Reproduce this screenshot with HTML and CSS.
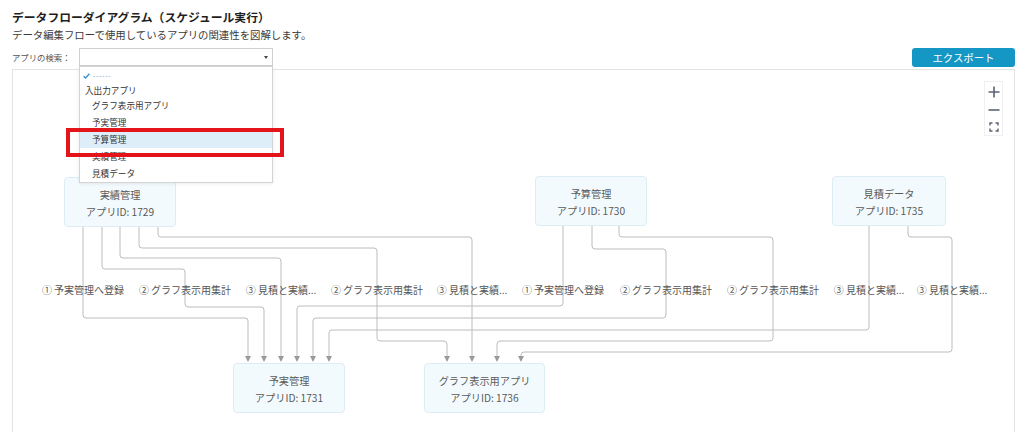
FILE: index.html
```html
<!DOCTYPE html>
<html lang="ja">
<head>
<meta charset="utf-8">
<title>データフローダイアグラム</title>
<link rel="stylesheet" href="styles.css">
</head>
<body>
<div class="page">
  <h1 class="title">データフローダイアグラム（スケジュール実行）</h1>
  <p class="subtitle">データ編集フローで使用しているアプリの関連性を図解します。</p>
  <div class="toolbar">
    <span class="search-label">アプリの検索：</span>
    <div class="select">
      <span class="select-arrow"></span>
      <ul class="dropdown">
        <li class="opt opt-none"><svg class="check" width="7" height="6" viewBox="0 0 7 6"><path d="M0.6 3.2 L2.6 5 L6.4 0.8" fill="none" stroke="#3d8fd6" stroke-width="1.4"/></svg><span class="dashes">------</span></li>
        <li class="opt opt-group">入出力アプリ</li>
        <li class="opt">グラフ表示用アプリ</li>
        <li class="opt">予実管理</li>
        <li class="opt opt-active">予算管理</li>
        <li class="opt">実績管理</li>
        <li class="opt">見積データ</li>
      </ul>
      <div class="highlight-box"></div>
    </div>
    <button class="export">エクスポート</button>
  </div>
  <div class="canvas">
    <svg class="edges" width="1001" height="380" viewBox="0 0 1001 380">
      <g transform="translate(-13,-71)" fill="none" stroke="#bcbcbc" stroke-width="1">
        <path d="M83 227 V316 Q83 319 86 319 H245 Q248 319 248 322 V357"/>
        <path d="M102 227 V267 Q102 270 105 270 H182 Q185 270 185 273 V305 Q185 308 188 308 H261 Q264 308 264 311 V357"/>
        <path d="M120 227 V256 Q120 259 123 259 H278 Q281 259 281 262 V357"/>
        <path d="M139 227 V246 Q139 249 142 249 H374 Q377 249 377 252 V339 Q377 342 380 342 H444 Q447 342 447 345 V357"/>
        <path d="M158 227 V235 Q158 238 161 238 H469 Q472 238 472 241 V357"/>
        <path d="M563 227 V304 Q563 307 560 307 H300 Q297 307 297 310 V357"/>
        <path d="M592 227 V247 Q592 250 595 250 H663 Q666 250 666 253 V316 Q666 319 663 319 H316 Q313 319 313 322 V357"/>
        <path d="M619 227 V235 Q619 238 622 238 H770 Q773 238 773 241 V339 Q773 342 770 342 H500 Q497 342 497 345 V357"/>
        <path d="M869 227 V328 Q869 331 866 331 H332 Q329 331 329 334 V357"/>
        <path d="M908 227 V235 Q908 238 911 238 H949 Q952 238 952 241 V350 Q952 353 949 353 H524 Q521 353 521 356 V357"/>
      </g>
      <g transform="translate(-13,-71)" fill="#9a9a9a">
        <polygon points="245,357 251,357 248,363"/>
        <polygon points="261,357 267,357 264,363"/>
        <polygon points="278,357 284,357 281,363"/>
        <polygon points="294,357 300,357 297,363"/>
        <polygon points="310,357 316,357 313,363"/>
        <polygon points="326,357 332,357 329,363"/>
        <polygon points="444,357 450,357 447,363"/>
        <polygon points="469,357 475,357 472,363"/>
        <polygon points="494,357 500,357 497,363"/>
        <polygon points="518,357 524,357 521,363"/>
      </g>
    </svg>

    <div class="node" style="left:51px;top:107px;width:112px;"><div>実績管理</div><div>アプリID: 1729</div></div>
    <div class="node" style="left:522px;top:106px;width:112px;"><div>予算管理</div><div>アプリID: 1730</div></div>
    <div class="node" style="left:819px;top:106px;width:114px;"><div>見積データ</div><div>アプリID: 1735</div></div>
    <div class="node" style="left:220px;top:293px;width:112px;"><div>予実管理</div><div>アプリID: 1731</div></div>
    <div class="node" style="left:411px;top:293px;width:121px;"><div>グラフ表示用アプリ</div><div>アプリID: 1736</div></div>

    <span class="edge-label" style="left:70px;">① 予実管理へ登録</span>
    <span class="edge-label" style="left:172px;">② グラフ表示用集計</span>
    <span class="edge-label" style="left:268px;">③ 見積と実績...</span>
    <span class="edge-label" style="left:364px;">② グラフ表示用集計</span>
    <span class="edge-label" style="left:459px;">③ 見積と実績...</span>
    <span class="edge-label" style="left:550px;">① 予実管理へ登録</span>
    <span class="edge-label" style="left:653px;">② グラフ表示用集計</span>
    <span class="edge-label" style="left:760px;">② グラフ表示用集計</span>
    <span class="edge-label" style="left:856px;">③ 見積と実績...</span>
    <span class="edge-label" style="left:939px;">③ 見積と実績...</span>

    <div class="zoom-controls">
      <svg width="12" height="12" viewBox="0 0 12 12"><path d="M0.5 6 H11.5 M6 0.5 V11.5" stroke="#5b6473" stroke-width="1.6" fill="none"/></svg>
      <svg width="12" height="12" viewBox="0 0 12 12"><path d="M0.5 6 H11.5" stroke="#5b6473" stroke-width="1.6" fill="none"/></svg>
      <svg width="10" height="10" viewBox="0 0 10 10"><path d="M1 3.5 V1 H3.5 M6.5 1 H9 V3.5 M9 6.5 V9 H6.5 M3.5 9 H1 V6.5" stroke="#5b6473" stroke-width="1.4" fill="none"/></svg>
    </div>
  </div>
</div>
</body>
</html>
```

FILE: styles.css
```css
* { box-sizing: border-box; }

html, body {
  margin: 0;
  padding: 0;
  background: #ffffff;
}

body {
  font-family: "Noto Sans CJK JP", "Noto Sans", sans-serif;
  color: #333333;
  overflow: hidden;
}

.page {
  padding: 9px 9px 0 12px;
}

.title {
  margin: 0;
  font-size: 11.8px;
  font-weight: bold;
  line-height: 16px;
  color: #1e1e1e;
}

.subtitle {
  margin: 2px 0 0 0;
  font-size: 10.4px;
  line-height: 16px;
  color: #3a3a3a;
}

.toolbar {
  display: flex;
  align-items: center;
  margin-top: 5px;
  height: 18px;
}

.search-label {
  width: 67px;
  font-size: 8.4px;
  color: #555555;
  line-height: 18px;
}

.select {
  position: relative;
  width: 194px;
  height: 18px;
  border: 1px solid #cfcfcf;
  background: #ffffff;
}

.select-arrow {
  position: absolute;
  right: 4px;
  top: 7px;
  width: 0;
  height: 0;
  border-left: 2.5px solid transparent;
  border-right: 2.5px solid transparent;
  border-top: 3.5px solid #444444;
}

.dropdown {
  position: absolute;
  left: -1px;
  top: 17px;
  width: 194px;
  margin: 0;
  padding: 2px 0 0 0;
  list-style: none;
  background: #ffffff;
  border: 1px solid #d4d4d4;
  box-shadow: 0 1px 3px rgba(0, 0, 0, 0.08);
  z-index: 5;
}

.opt {
  height: 17px;
  line-height: 17px;
  padding-left: 12px;
  font-size: 8.6px;
  color: #333333;
}

.opt-none {
  height: 14px;
  line-height: 14px;
  padding-left: 3px;
  display: flex;
  align-items: center;
}

.check {
  display: block;
  margin-right: 3px;
}

.dashes {
  font-family: "DejaVu Sans", sans-serif;
  font-size: 6px;
  color: #4a90d6;
  letter-spacing: 0.9px;
}

.opt-group {
  height: 14px;
  line-height: 14px;
  padding-left: 5px;
}

.opt-active {
  background: #ddeef9;
}

.highlight-box {
  position: absolute;
  left: -14px;
  top: 79px;
  width: 218px;
  height: 29px;
  border: 4px solid #e4141b;
  z-index: 6;
}

.export {
  margin-left: auto;
  width: 103px;
  height: 19px;
  padding: 0;
  border: none;
  border-radius: 3px;
  background: #1597c5;
  color: #ffffff;
  font-family: "Noto Sans CJK JP", "Noto Sans", sans-serif;
  font-size: 10.4px;
  line-height: 19px;
}

.canvas {
  position: relative;
  margin-top: 3px;
  height: 380px;
  border: 1px solid #e3e3e3;
  background: #ffffff;
}

.edges {
  position: absolute;
  left: 0;
  top: 0;
  overflow: visible;
}

.node {
  position: absolute;
  height: 50px;
  padding-top: 8px;
  border: 1px solid #dcedf4;
  border-radius: 4px;
  background: #f3fafd;
  text-align: center;
  font-size: 10.2px;
  line-height: 17px;
  color: #5a5a5a;
}

.edge-label {
  position: absolute;
  top: 212px;
  transform: translateX(-50%);
  white-space: nowrap;
  font-size: 10px;
  line-height: 16px;
  color: #555555;
}

.zoom-controls {
  position: absolute;
  right: 11px;
  top: 11px;
  width: 19px;
  height: 55px;
  padding-top: 4px;
  display: flex;
  flex-direction: column;
  align-items: center;
  gap: 6px;
  background: #ffffff;
  border: 1px solid #f0f0f0;
}
```
